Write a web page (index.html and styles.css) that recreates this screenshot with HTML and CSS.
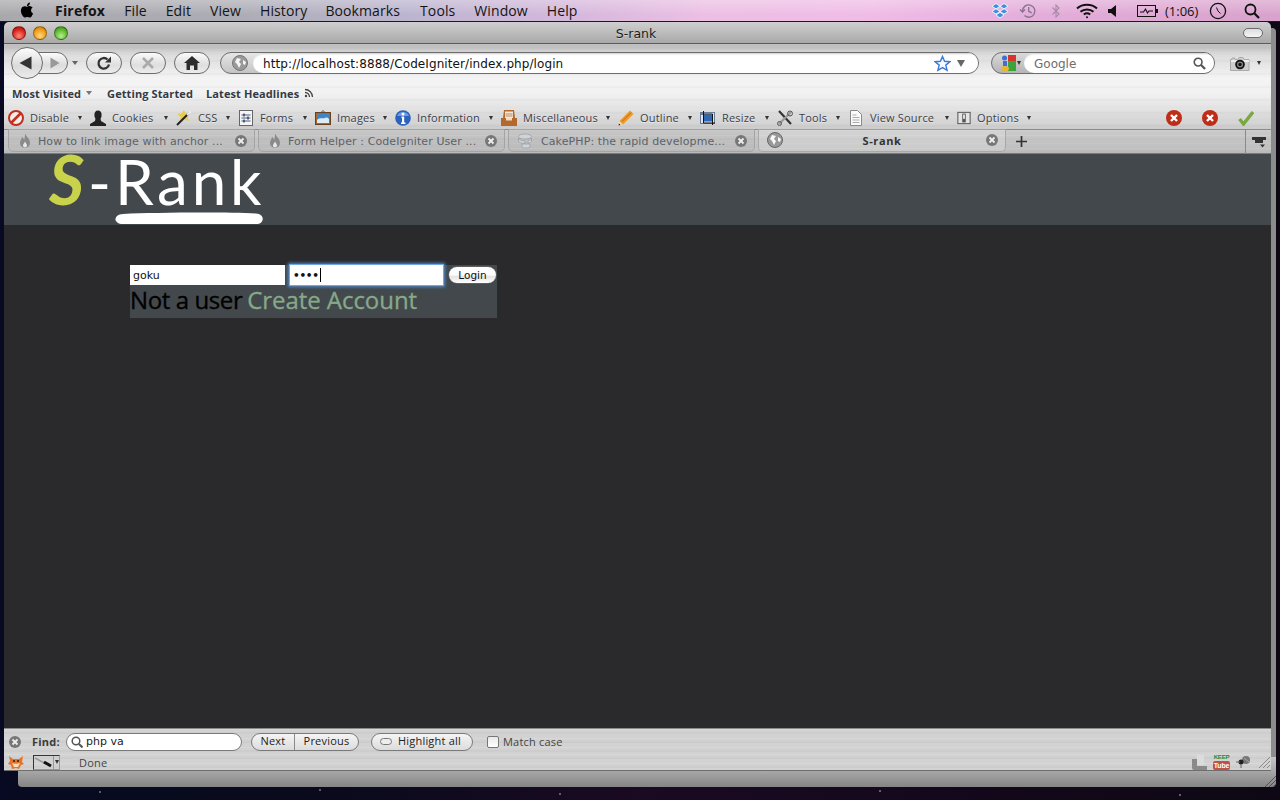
FILE: index.html
```html
<!DOCTYPE html>
<html lang="en">
<head>
<meta charset="utf-8">
<title>S-rank</title>
<link rel="stylesheet" href="styles.css">
</head>
<body>
<header class="menubar">
  <svg class="apple" viewBox="0 0 24 24" width="18" height="18"><path d="M18.71 19.5c-.83 1.24-1.71 2.45-3.05 2.47-1.34.03-1.77-.79-3.29-.79-1.53 0-2 .77-3.27.82-1.31.05-2.3-1.32-3.14-2.53C4.25 17 2.94 12.45 4.7 9.39c.87-1.52 2.43-2.48 4.12-2.51 1.28-.02 2.5.87 3.29.87.78 0 2.26-1.07 3.8-.91.65.03 2.47.26 3.64 1.98-.09.06-2.17 1.28-2.15 3.81.03 3.02 2.65 4.03 2.68 4.04-.03.07-.42 1.44-1.38 2.83M13 3.5c.73-.83 1.94-1.46 2.94-1.5.13 1.17-.34 2.35-1.04 3.19-.69.85-1.83 1.51-2.95 1.42-.15-1.15.41-2.35 1.05-3.11z"/></svg>
  <nav class="menus">
    <span class="menu menu-app">Firefox</span><span class="menu">File</span><span class="menu">Edit</span><span class="menu">View</span><span class="menu">History</span><span class="menu">Bookmarks</span><span class="menu">Tools</span><span class="menu">Window</span><span class="menu">Help</span>
  </nav>
  <div class="extras">
    <svg class="x-dropbox" viewBox="0 0 18 16" width="18" height="16"><g fill="#3d8fe0" stroke="#fff" stroke-width=".8"><path d="M5 0.6 9 3.2 5 5.8 1 3.2z"/><path d="M13 0.6 17 3.2 13 5.8 9 3.2z"/><path d="M5 5.8 9 8.4 5 11 1 8.4z"/><path d="M13 5.8 17 8.4 13 11 9 8.4z"/><path d="M5 12 9 9.4 13 12 9 15 5 12z"/></g></svg>
    <svg class="x-tm" viewBox="0 0 18 16" width="18" height="16" fill="none" stroke="#85728a" stroke-width="1.3"><path d="M3.5 8a6.2 6.2 0 1 1 2 4.6"/><path d="M1 6.5 3.5 9 6 6.5"/><path d="M9.7 4v4.3l3 1.6"/></svg>
    <svg class="x-bt" viewBox="0 0 10 16" width="10" height="16" fill="none" stroke="#a88aa5" stroke-width="1.1"><path d="M1.5 4.5 8 11 5 14V2L8 5 1.5 11.5"/></svg>
    <svg class="x-wifi" viewBox="0 0 22 16" width="22" height="16" fill="none" stroke="#111" stroke-width="2"><path d="M1 5.5C6.500 .5 15.500 .5 21 5.500"/><path d="M4.500 8.700C8 5.600 14 5.600 17.500 8.700"/><path d="M7.800 11.500C9.800 10 12.200 10 14.200 11.500"/><circle cx="11" cy="14.200" r="1" fill="#111" stroke="none"/></svg>
    <svg class="x-vol" viewBox="0 0 8 12" width="8" height="12"><path d="M0 4h3L8 0v12L3 8H0z" fill="#111"/></svg>
    <svg class="x-batt" viewBox="0 0 22 12" width="22" height="12" fill="none" stroke="#111"><rect x=".5" y=".5" width="18" height="11"/><path d="M3 7h3.500l2-3 2 4 1.500-2h4" stroke-width="1.100"/><path d="M20 4v4" stroke-width="2"/></svg>
    <span class="x-time">(1:06)</span>
    <svg class="x-clock" viewBox="0 0 18 18" width="18" height="18" fill="none" stroke="#111" stroke-width="1.300"><circle cx="9" cy="9" r="7.600"/><path d="M9 9 7.500 5.500M9 9l2.500 2.500" stroke-width="1"/></svg>
    <svg class="x-spot" viewBox="0 0 16 16" width="16" height="16" fill="none" stroke="#111" stroke-width="1.800"><circle cx="6.500" cy="6.500" r="5"/><path d="M10.300 10.300 15 15" stroke-width="2.300"/></svg>
  </div>
</header>

<div class="back-window">
  <svg class="back-grip back-grip-low" viewBox="0 0 11 11" width="11" height="11" stroke="#555"><path d="M0 11 11 0M4 11 11 4M8 11 11 8"/></svg>
</div>

<main class="window">
  <div class="titlebar">
    <i class="light light-red"></i><i class="light light-amber"></i><i class="light light-green"></i>
    <span class="title">S-rank</span>
    <i class="toolbar-pill"></i>
  </div>

  <div class="chrome">
    <div class="navrow">
      <div class="backfwd">
        <button class="back"><svg viewBox="0 0 14 14" width="14" height="14"><path d="M0.500 7 12.500 0.500v13z" fill="#333"/></svg></button>
        <button class="fwd"><svg viewBox="0 0 10 12" width="10" height="12"><path d="M9.500 6 .500 .5v11z" fill="#999"/></svg></button>
      </div>
      <i class="caret caret-hist"></i>
      <button class="pill pill-reload"><svg viewBox="0 0 16 16" width="16" height="16" fill="none" stroke="#333" stroke-width="2.300"><path d="M13 9.500a5.300 5.300 0 1 1-1.500-5"/><path d="M15 1.500v6h-6z" fill="#333" stroke="none"/></svg></button>
      <button class="pill"><svg viewBox="0 0 14 14" width="14" height="14" stroke="#aaa" stroke-width="2.500"><path d="M2 2 12 12M12 2 2 12"/></svg></button>
      <button class="pill"><svg viewBox="0 0 16 14" width="16" height="14" fill="#2c2c2c"><path d="M8 0 0 7h2.500v7H6V9.500h4V14h3.500V7H16z"/></svg></button>
      <div class="urlbar">
        <div class="url-site"><svg viewBox="0 0 16 16" width="16" height="16"><circle cx="8" cy="8" r="7.500" fill="#999" stroke="#777"/><path d="M5 3 9 4 7 7 9 9 7 13 5 9 3 7zM11 5l3 2-1 3-2-1z" fill="#f6f6f6"/></svg></div>
        <div class="url-field">
          <span class="url-text">http://localhost:8888/CodeIgniter/index.php/login</span>
          <svg class="star" viewBox="0 0 18 18" width="17" height="17"><path d="M9 1.500 11.200 6.700 16.800 7.100 12.500 10.700 13.900 16.200 9 13.300 4.100 16.200 5.500 10.700 1.200 7.100 6.800 6.700z" fill="#f4f8ff" stroke="#3d78d6" stroke-width="1.500"/></svg>
          <i class="caret caret-url"></i>
        </div>
      </div>
      <div class="searchbar">
        <div class="search-engine">
          <svg viewBox="0 0 15 16" width="15" height="16"><path d="M7 0h8v6H7z" fill="#d9342b"/><path d="M7 6h8v10H7z" fill="#3aa33c"/><circle cx="3.500" cy="3" r="2.500" fill="#3d6fd8"/><path d="M2 6h4v5H2z" fill="#3d6fd8"/><ellipse cx="4" cy="13.500" rx="4" ry="2.500" fill="#edb52e"/></svg>
          <i class="caret caret-small"></i>
        </div>
        <div class="search-field">
          <span class="search-text">Google</span>
          <svg viewBox="0 0 14 14" width="13" height="13" fill="none" stroke="#555" stroke-width="1.700"><circle cx="5.500" cy="5.500" r="4.200"/><path d="M8.700 8.700 13 13" stroke-width="2.400"/></svg>
        </div>
      </div>
      <svg class="camera" viewBox="0 0 20 15" width="20" height="15"><path d="M.5 3.500h1.500V2h3v1.500h3l1-2h4l1 2h5v11H.5z" fill="#cfcfcf" stroke="#aaa"/><path d="M1 4h18v2H1z" fill="#eee"/><circle cx="10" cy="8.500" r="4.800" fill="#111"/><circle cx="10" cy="8.500" r="3" fill="#888"/><circle cx="10" cy="8.500" r="1.700" fill="#111"/></svg>
      <i class="caret caret-cam"></i>
    </div>

    <div class="bookmarks">
      <span class="bm">Most Visited</span><i class="caret caret-bm"></i>
      <span class="bm bm-gs">Getting Started</span>
      <span class="bm bm-lh">Latest Headlines</span>
      <svg class="rss" viewBox="0 0 10 10" width="10" height="10" fill="none" stroke="#444" stroke-width="1.300"><circle cx="2" cy="8" r="1.200" fill="#444" stroke="none"/><path d="M1 4.500a4.500 4.500 0 0 1 4.500 4.500M1 1.500a7.500 7.500 0 0 1 7.500 7.500"/></svg>
    </div>

    <div class="devbar">
      <div class="dev">
        <svg viewBox="0 0 16 16" width="16" height="16"><circle cx="8" cy="8" r="7" fill="#f4ece8" stroke="#c0301f" stroke-width="2"/><path d="M3.500 12.500 12.500 3.500" stroke="#c0301f" stroke-width="2.600"/></svg>
        <span class="dev-t w-disable">Disable</span><i class="dev-a"></i>
      </div>
      <div class="dev">
        <svg viewBox="0 0 16 16" width="16" height="16" fill="#222"><ellipse cx="8" cy="5" rx="3.600" ry="4.500"/><path d="M5.500 8.500h5l.5 2.500 5 3v2H0v-2l5-3z"/></svg>
        <span class="dev-t w-cookies">Cookies</span><i class="dev-a"></i>
      </div>
      <div class="dev">
        <svg viewBox="0 0 16 16" width="16" height="16"><path d="M8 0l1.500 3.500L14 3l-2.500 3.500L13 11 8.500 9.500 4 12l.5-5L1 4l4.500-.5z" fill="#e8cc50"/><path d="M1 15 13 3" stroke="#222" stroke-width="2"/><path d="M11 5 14.500 1.500" stroke="#eee" stroke-width="2"/></svg>
        <span class="dev-t w-css">CSS</span><i class="dev-a"></i>
      </div>
      <div class="dev">
        <svg viewBox="0 0 16 16" width="16" height="16"><rect x="1.500" y=".5" width="13" height="15" fill="#f5f5f5" stroke="#666"/><path d="M3.500 5h9M3.500 8h9M3.500 11h9" stroke="#3b5f93" stroke-width="1.200"/><path d="M6 3.500v3M10 6.500v3M6 9.500v3" stroke="#333" stroke-width="1.300"/></svg>
        <span class="dev-t w-forms">Forms</span><i class="dev-a"></i>
      </div>
      <div class="dev">
        <svg viewBox="0 0 16 16" width="16" height="16"><rect x=".5" y="2.500" width="15" height="12" fill="#a9672c" stroke="#6b4018"/><rect x="2" y="4" width="12" height="9" fill="#3f86c9"/><path d="M2 10c3-3 6-1 8-2s3 0 4 1v4H2z" fill="#dcecf7"/><path d="M6 2.500 8 .5 10 2.500" fill="none" stroke="#555"/></svg>
        <span class="dev-t w-images">Images</span><i class="dev-a"></i>
      </div>
      <div class="dev">
        <svg viewBox="0 0 16 16" width="16" height="16"><circle cx="8" cy="8" r="7.800" fill="#2a62bd"/><path d="M2 6a6.500 6.500 0 0 1 12 0z" fill="#6d9bdf"/><circle cx="8" cy="4" r="1.500" fill="#fff"/><path d="M6.500 6.500h2.700v6H10.500V14H6v-1.500h1v-4.500h-.5z" fill="#fff"/></svg>
        <span class="dev-t w-info">Information</span><i class="dev-a"></i>
      </div>
      <div class="dev">
        <svg viewBox="0 0 16 16" width="16" height="16"><path d="M3 0h10l1 8h2v8H0V8h2z" fill="#b5682c"/><path d="M4 1.500h8v6.500H4z" fill="#f6e9d9"/><path d="M4.500 4h7M4.500 6h7" stroke="#b58a5f"/><path d="M5 8h6v2.500H5z" fill="#f0dcc4"/></svg>
        <span class="dev-t w-misc">Miscellaneous</span><i class="dev-a"></i>
      </div>
      <div class="dev">
        <svg viewBox="0 0 16 16" width="16" height="16"><path d="M12 .5 15.500 4 5 14.500 1.500 11z" fill="#ee9a2a"/><path d="M1.500 11 .5 15.500 5 14.500z" fill="#f3d7a8"/><path d="M.5 15.500 1 13.500 2.500 15z" fill="#222"/><path d="M4 11.500 13 2.500" stroke="#b86a12"/></svg>
        <span class="dev-t w-outline">Outline</span><i class="dev-a"></i>
      </div>
      <div class="dev">
        <svg viewBox="0 0 16 16" width="16" height="16"><rect x=".5" y="2.500" width="14" height="11" fill="#dfe6ef" stroke="#6a7d98"/><rect x="4" y="4.500" width="8" height="7" fill="#2f68b5"/><path d="M3.500 1v12h11.500M1 4h11.500v11" fill="none" stroke="#111"/></svg>
        <span class="dev-t w-resize">Resize</span><i class="dev-a"></i>
      </div>
      <div class="dev">
        <svg viewBox="0 0 16 16" width="16" height="16" fill="none"><path d="M2 1 14 14" stroke="#333" stroke-width="2.200"/><path d="M14 2 2 14" stroke="#999" stroke-width="2.200"/><circle cx="13" cy="3.500" r="2.500" stroke="#555"/><circle cx="2.500" cy="13.500" r="2" stroke="#555"/></svg>
        <span class="dev-t w-tools">Tools</span><i class="dev-a"></i>
      </div>
      <div class="dev">
        <svg viewBox="0 0 16 16" width="16" height="16"><path d="M2.500 .5h7l4 4v11h-11z" fill="#fafafa" stroke="#888"/><path d="M4.500 5h4M4.500 7.500h7M4.500 10h7M4.500 12.500h7" stroke="#aaa"/></svg>
        <span class="dev-t w-source">View Source</span><i class="dev-a"></i>
      </div>
      <div class="dev">
        <svg viewBox="0 0 16 16" width="14" height="16"><rect x="1" y="1.500" width="14" height="13" fill="#e4e4e4" stroke="#444"/><rect x="6" y="3" width="4" height="10" fill="#555"/><rect x="7" y="4" width="2" height="5" fill="#eee"/></svg>
        <span class="dev-t w-options">Options</span><i class="dev-a"></i>
      </div>
      <div class="dev-status">
        <svg viewBox="0 0 16 16" width="16" height="16"><circle cx="8" cy="8" r="8" fill="#bd2d17"/><path d="M5 5 11 11M11 5 5 11" stroke="#fff" stroke-width="2.400"/></svg>
        <svg viewBox="0 0 16 16" width="16" height="16"><circle cx="8" cy="8" r="8" fill="#bd2d17"/><path d="M5 5 11 11M11 5 5 11" stroke="#fff" stroke-width="2.400"/></svg>
        <svg viewBox="0 0 16 16" width="16" height="16" fill="none"><path d="M1.500 9 5.500 14 15 2" stroke="#7ba845" stroke-width="3.400"/></svg>
      </div>
    </div>

    <div class="tabs">
      <div class="tab">
        <svg class="fav" viewBox="0 0 16 16" width="16" height="16"><path d="M8 .5c1 3 5 5 5 9.500a5 5 0 0 1-10 0C3 7 5 6 5 4c1 .5 2 1.500 2 3 1-2 1-4.500 1-6.500z" fill="#8a8a8a"/><path d="M8 8c0 2-2 2.500-2 4.500a2 2 0 0 0 4 0C10 10.500 8 10 8 8z" fill="#e8e8e8"/></svg>
        <span class="tab-t">How to link image with anchor ...</span>
        <svg class="tab-x" viewBox="0 0 12 12" width="12" height="12"><circle cx="6" cy="6" r="6" fill="#777"/><path d="M3.500 3.500 8.500 8.500M8.500 3.500 3.500 8.500" stroke="#eee" stroke-width="1.800"/></svg>
      </div>
      <div class="tab">
        <svg class="fav" viewBox="0 0 16 16" width="16" height="16"><path d="M8 .5c1 3 5 5 5 9.500a5 5 0 0 1-10 0C3 7 5 6 5 4c1 .5 2 1.500 2 3 1-2 1-4.500 1-6.500z" fill="#8a8a8a"/><path d="M8 8c0 2-2 2.500-2 4.500a2 2 0 0 0 4 0C10 10.500 8 10 8 8z" fill="#e8e8e8"/></svg>
        <span class="tab-t">Form Helper : CodeIgniter User ...</span>
        <svg class="tab-x" viewBox="0 0 12 12" width="12" height="12"><circle cx="6" cy="6" r="6" fill="#777"/><path d="M3.500 3.500 8.500 8.500M8.500 3.500 3.500 8.500" stroke="#eee" stroke-width="1.800"/></svg>
      </div>
      <div class="tab">
        <svg class="fav fav-cake" viewBox="0 0 16 16" width="16" height="16" fill="#cfd4d8" stroke="#9aa0a5" stroke-width=".8"><ellipse cx="8" cy="3.500" rx="6.500" ry="2.500"/><path d="M1.500 5v3c0 1.300 3 2.500 6.500 2.500V8C4.500 8 1.500 6.500 1.500 5zM14.500 5v3c0 1-1.500 2-3.500 2.300V7.800C13 7.400 14.500 6 14.500 5z"/><path d="M5 11v2.500c0 1 1.500 1.500 4 1.500s4-.5 4-1.500V11z"/></svg>
        <span class="tab-t">CakePHP: the rapid developme...</span>
        <svg class="tab-x" viewBox="0 0 12 12" width="12" height="12"><circle cx="6" cy="6" r="6" fill="#777"/><path d="M3.500 3.500 8.500 8.500M8.500 3.500 3.500 8.500" stroke="#eee" stroke-width="1.800"/></svg>
      </div>
      <div class="tab tab-active">
        <svg class="fav" viewBox="0 0 16 16" width="16" height="16"><circle cx="8" cy="8" r="7.500" fill="#999" stroke="#666"/><path d="M5 3 9 4 7 7 9 9 7 13 5 9 3 7zM11 5l3 2-1 3-2-1z" fill="#f8f8f8"/></svg>
        <span class="tab-t tab-t-active">S-rank</span>
        <svg class="tab-x" viewBox="0 0 12 12" width="12" height="12"><circle cx="6" cy="6" r="6" fill="#777"/><path d="M3.500 3.500 8.500 8.500M8.500 3.500 3.500 8.500" stroke="#eee" stroke-width="1.800"/></svg>
      </div>
      <div class="tab-rest">
        <svg class="plus" viewBox="0 0 11 11" width="11" height="11"><path d="M5.500 0v11M0 5.500h11" stroke="#333" stroke-width="1.700"/></svg>
        <div class="tab-list">
          <svg viewBox="0 0 14 12" width="14" height="12" fill="#333"><path d="M0 1h14v3H0zM3 4h8v3H3z"/><path d="M8 8.500h5L10.500 11.500z"/></svg>
        </div>
      </div>
    </div>
  </div>

  <div class="page">
    <div class="site-head">
      <div class="logo"><span class="logo-s">S</span><span class="logo-rest">-Rank</span></div>
      <svg class="swoosh" viewBox="0 0 148 12" width="148" height="12"><path d="M8 2C40 .5 110 0 141 1.500c9 .5 9 10.500 0 10.500H8C-2 12-2 2.500 8 2z" fill="#fff"/></svg>
    </div>
    <div class="site-body">
      <form class="login">
        <div class="login-row">
          <input class="field" type="text" value="goku">
          <div class="field field-focus"><span class="dots">••••</span><i class="cursor"></i></div>
          <button type="button" class="login-btn">Login</button>
        </div>
        <p class="login-foot">Not a user <a class="create">Create Account</a></p>
      </form>
    </div>
  </div>

  <div class="findbar">
    <svg class="find-x" viewBox="0 0 12 12" width="12" height="12"><circle cx="6" cy="6" r="6" fill="#777"/><path d="M3.500 3.500 8.500 8.500M8.500 3.500 3.500 8.500" stroke="#eee" stroke-width="1.800"/></svg>
    <b class="find-l">Find:</b>
    <div class="find-field">
      <svg viewBox="0 0 12 12" width="12" height="12" fill="none" stroke="#555" stroke-width="1.500"><circle cx="5" cy="5" r="3.800"/><path d="M8 8 11.500 11.500" stroke-width="2"/></svg>
      <span>php va</span>
    </div>
    <div class="seg"><span class="seg-a">Next</span><span class="seg-b">Previous</span></div>
    <div class="hl"><i class="hl-ico"></i><span class="hl-t">Highlight all</span></div>
    <i class="check"></i>
    <span class="match">Match case</span>
  </div>

  <footer class="statusbar">
    <svg class="fox" viewBox="0 0 16 16" width="16" height="16"><path d="M1 2 5 5h6l4-3-1 6 2 2-3 1-2 4-3-1-4 1-1-4-3-1 2-3z" fill="#e5732a"/><path d="M4 9c2 1 6 1 8 0l-2 4H6z" fill="#f7ddb5"/><circle cx="6" cy="7" r="1" fill="#222"/><circle cx="10" cy="7" r="1" fill="#222"/></svg>
    <div class="dropper">
      <div class="dropper-ico"><svg viewBox="0 0 20 12" width="20" height="12"><path d="M1 2 12 8" stroke="#999" stroke-width="1.500"/><path d="M10 6 17 10" stroke="#111" stroke-width="3"/></svg></div>
      <div class="dropper-a"><i class="dev-a"></i></div>
    </div>
    <span class="done">Done</span>
    <div class="status-right">
      <svg viewBox="0 0 15 16" width="15" height="16"><path d="M0 5h5v7h10v4H2a2 2 0 0 1-2-2z" fill="#8a8a8a"/><path d="M5 1h6a1 1 0 0 1 1 1v9H6a1 1 0 0 1-1-1z" fill="#dcdcdc"/></svg>
      <div class="keep"><span class="keep-a">KEEP</span><span class="keep-b">Tube</span></div>
      <svg viewBox="0 0 16 14" width="16" height="14"><circle cx="10" cy="5" r="4" fill="#777"/><circle cx="5" cy="7" r="2.500" fill="#222"/><path d="M0 7h4M5 9v4" stroke="#666"/><path d="M8 3 13 7" stroke="#aaa"/></svg>
    </div>
    <svg class="grip" viewBox="0 0 11 11" width="11" height="11" stroke="#8a8a8a"><path d="M0 11 11 0M4 11 11 4M8 11 11 8"/></svg>
  </footer>
</main>
</body>
</html>
```

FILE: styles.css
```css
* { box-sizing: border-box; }

html, body { margin: 0; height: 100%; }

body {
  width: 1280px;
  height: 800px;
  overflow: hidden;
  position: relative;
  font-family: "DejaVu Sans", sans-serif;
  background:
    radial-gradient(circle at 6px 760px, #8088a8 0 1px, transparent 1.500px),
    radial-gradient(circle at 100px 792px, #555a70 0 1px, transparent 1.500px),
    radial-gradient(circle at 320px 790px, #555a70 0 1px, transparent 1.500px),
    radial-gradient(circle at 560px 794px, #6a5a70 0 1px, transparent 1.500px),
    radial-gradient(circle at 880px 791px, #6a5a70 0 1px, transparent 1.500px),
    radial-gradient(circle at 1180px 795px, #6a5a70 0 1px, transparent 1.500px),
    linear-gradient(90deg, #070a22 0, #0a0a1c 25%, #1a0a22 50%, #12081a 80%, #0e0814 100%);
}

i { display: block; flex: none; }
svg { display: block; flex: none; }
button { font: inherit; padding: 0; margin: 0; }

/* Menu bar */
.menubar {
  height: 22px;
  display: flex;
  align-items: center;
  border-bottom: 1px solid #1a1a1a;
  background:
    linear-gradient(180deg, rgba(255,255,255,.28), rgba(255,255,255,0) 70%),
    linear-gradient(90deg, #a9a9ad 0, #acacb4 18%, #bcb5d0 32%, #d6b8dc 45%, #ecbfe4 55%, #f0bce6 68%, #e4aedb 80%, #d9a2cc 100%);
  color: #111;
  font-size: 14px;
}
.apple { margin-left: 18px; margin-top: -2px; }
.menus { display: flex; margin-left: 19px; }
.menu { margin-right: 19px; font-family: "Open Sans", sans-serif; font-size: 14px; line-height: 21px; color: #141414; letter-spacing: .1px; }
.menu:nth-child(6) { margin-right: 20px; }
.menu:nth-child(5) { margin-right: 18px; }
.menu-app { font-weight: 700; letter-spacing: .2px; margin-right: 19px; }
.extras { margin-left: auto; display: flex; align-items: center; height: 21px; position: relative; width: 290px; }
.x-dropbox { margin-left: 1px; }
.x-tm { margin-left: 10px; }
.x-bt { margin-left: 14px; }
.x-wifi { margin-left: 15px; }
.x-vol { margin-left: 10px; }
.x-batt { margin-left: 21px; }
.x-time { margin-left: 6px; font-family: "Open Sans", sans-serif; font-size: 13px; color: #111; width: 38px; }
.x-clock { margin-left: 6px; }
.x-spot { margin-left: 17px; }

/* Windows */
.back-window {
  position: absolute;
  left: 18px;
  top: 28px;
  width: 1258px;
  height: 759px;
  border-radius: 0 4px 4px 4px;
  background: linear-gradient(180deg, #8c8c8c 0, #8c8c8c 96%, #c4c4c4 96.100%, #858585 100%);
}
.back-grip-low { position: absolute; right: 0; bottom: 0; }
.window {
  position: absolute;
  left: 4px;
  top: 22px;
  width: 1267px;
  height: 749px;
  display: flex;
  flex-direction: column;
  border-radius: 5px 5px 0 0;
  overflow: hidden;
  background: #2a2a2c;
}

.titlebar {
  height: 22px;
  flex: none;
  display: flex;
  align-items: center;
  position: relative;
  border-bottom: 1px solid #5c5c5c;
  background: linear-gradient(180deg, #cfcfcf, #a9a9a9);
  padding-left: 8px;
}
.light { width: 14px; height: 14px; border-radius: 50%; margin-right: 7px; border: 1px solid rgba(0,0,0,.35); }
.light-red { background: radial-gradient(circle at 50% 75%, #ff8a7c, #d8231c 60%, #a70f0c); }
.light-amber { background: radial-gradient(circle at 50% 75%, #ffd97a, #f09b17 60%, #bb6e07); }
.light-green { background: radial-gradient(circle at 50% 75%, #b8f08c, #5cb52e 60%, #37801a); }
.title { position: absolute; left: 0; right: 0; top: 4px; text-align: center; font-size: 12.500px; line-height: 16px; color: #1c1c1c; padding-right: 3px; text-shadow: 0 1px 0 rgba(255,255,255,.35); }
.toolbar-pill { margin-left: auto; margin-right: 8px; width: 20px; height: 10px; border-radius: 5px; border: 1px solid #6a6a6a; background: linear-gradient(180deg, #ddd, #f4f4f4); }

/* Metal chrome */
.chrome {
  flex: none;
  height: 110px;
  display: flex;
  flex-direction: column;
  background:
    repeating-linear-gradient(180deg, rgba(255,255,255,.1) 0 1px, transparent 1px 3px, rgba(0,0,0,.02) 3px 5px, transparent 5px 8px, rgba(255,255,255,.06) 8px 9px, transparent 9px 13px),
    linear-gradient(180deg, #b9b9b9 0, #dcdcdc 10%, #f4f4f4 32%, #f1f1f1 45%, #dedede 62%, #c9c9c9 80%, #bcbcbc 100%);
}
.navrow { height: 38px; flex: none; display: flex; align-items: center; padding-left: 7px; }
.backfwd { display: flex; align-items: center; width: 57px; flex: none; }
.back {
  width: 32px; height: 32px; border-radius: 50%; flex: none;
  display: flex; align-items: center; justify-content: center;
  border: 1px solid #6d6d6d; position: relative; z-index: 1;
  background: linear-gradient(180deg, #fdfdfd, #dadada 60%, #ececec);
}
.back svg { margin-left: -2px; }
.fwd {
  width: 37px; height: 22px; margin-left: -12px; flex: none;
  border: 1px solid #6d6d6d; border-radius: 0 11px 11px 0;
  display: flex; align-items: center; padding-left: 18px;
  background: linear-gradient(180deg, #fbfbfb, #dcdcdc 60%, #ececec);
}
.caret { width: 0; height: 0; border-left: 3.500px solid transparent; border-right: 3.500px solid transparent; border-top: 4px solid #666; }
.caret-hist { margin-left: 4px; margin-right: 8px; }
.pill {
  width: 36px; height: 22px; border-radius: 11px; flex: none; margin-right: 8px;
  border: 1px solid #6d6d6d;
  display: flex; align-items: center; justify-content: center;
  background: linear-gradient(180deg, #fbfbfb, #dedede 60%, #ececec);
}
.urlbar {
  margin-left: 2px; width: 759px; height: 22px; flex: none; display: flex;
  border: 1px solid #6d6d6d; border-radius: 11px; overflow: hidden;
  background: linear-gradient(180deg, #e6e6e6, #c4c4c4);
}
.url-site { width: 32px; flex: none; display: flex; align-items: center; justify-content: center; padding-left: 6px; }
.url-field {
  flex: 1; display: flex; align-items: center;
  border-radius: 11px 0 0 11px; background: #fff;
  box-shadow: inset 0 2px 2px -1px #ccc;
  padding: 0 13px 0 10px;
}
.url-text { flex: 1; font-size: 12px; line-height: 16px; padding-top: 1px; color: #111; letter-spacing: .09px; white-space: nowrap; }
.star { margin-right: 6px; }
.caret-url { border-left-width: 4.500px; border-right-width: 4.500px; border-top-width: 7px; border-top-color: #666; }
.searchbar {
  margin-left: 12px; width: 224px; height: 22px; flex: none; display: flex;
  border: 1px solid #6d6d6d; border-radius: 11px; overflow: hidden;
  background: linear-gradient(180deg, #dadada, #b4b4b4);
}
.search-engine { width: 32px; flex: none; display: flex; align-items: center; padding-left: 9px; gap: 1px; }
.caret-small { border-left-width: 2.500px; border-right-width: 2.500px; border-top-width: 4px; border-top-color: #333; }
.search-field {
  flex: 1; display: flex; align-items: center; justify-content: space-between;
  border-radius: 11px 0 0 11px; background: #fff;
  box-shadow: inset 0 2px 2px -1px #ccc;
  padding: 0 8px 0 10px;
}
.search-text { font-size: 12px; line-height: 16px; padding-top: 1px; color: #6d6d6d; }
.camera { margin-left: 15px; }
.caret-cam { margin-left: 7px; border-left-width: 2.500px; border-right-width: 2.500px; border-top-color: #333; }

.bookmarks { height: 24px; flex: none; display: flex; align-items: center; padding-left: 8px; padding-bottom: 2px; }
.bm { font-size: 11px; font-weight: 700; color: #333a44; white-space: nowrap; font-family: "Open Sans", sans-serif; letter-spacing: .1px; text-shadow: 0 1px 0 rgba(255,255,255,.5); }
.caret-bm { margin-left: 5px; border-top-color: #777; }
.bm-gs { margin-left: 15px; }
.bm-lh { margin-left: 13px; }
.rss { margin-left: 5px; }

.devbar { height: 23px; flex: none; display: flex; align-items: center; padding-left: 4px; }
.dev { display: flex; align-items: center; margin-right: 8px; }
.dev-t { margin-left: 6px; font-size: 11px; color: #3a4048; white-space: nowrap; font-family: "Open Sans", sans-serif; letter-spacing: .18px; text-shadow: 0 1px 0 rgba(255,255,255,.4); }
.dev-a { margin-left: 8px; width: 0; height: 0; border-left: 2.500px solid transparent; border-right: 2.500px solid transparent; border-top: 4px solid #333; }
.w-disable { width: 40px; }
.w-cookies { width: 44px; }
.w-css { width: 20px; }
.w-forms { width: 35px; }
.w-images { width: 38px; }
.w-info { width: 64px; }
.w-misc { width: 75px; }
.w-outline { width: 40px; }
.w-resize { width: 35px; }
.w-tools { width: 29px; }
.w-source { width: 67px; }
.w-options { width: 42px; }
.dev-status { margin-left: auto; display: flex; gap: 20px; padding-right: 17px; }

.tabs { height: 25px; flex: none; display: flex; padding-left: 4px; border-bottom: 1px solid #7b7b7b; box-shadow: inset 0 1px 0 #8a8a8a; }
.tab {
  width: 247px; height: 23px; margin-right: 3px; flex: none;
  display: flex; align-items: center; padding: 0 7px 0 8px;
  border: 1px solid #a4a4a4; border-radius: 0 0 5px 5px;
  background: rgba(0,0,0,.02);
}
.fav { margin-right: 5px; width: 16px; }
.fav-cake { margin-right: 8px; }
.tab-t { flex: 1; font-size: 11px; line-height: 16px; padding-top: 2px; color: #5c6268; white-space: nowrap; font-family: "DejaVu Sans", sans-serif; letter-spacing: .1px; }
.tab-t-active { text-align: center; color: #333; font-weight: 700; padding-right: 10px; padding-top: 1px; font-family: "Open Sans", sans-serif; letter-spacing: .6px; }
.tab-active { width: 248px; margin-right: 0; border-top: 0; border-color: #a8a8a8; background: rgba(255,255,255,.18); height: 23px; }
.tab-rest { flex: 1; display: flex; align-items: center; justify-content: space-between; padding-left: 10px; height: 24px; }
.plus { margin-top: 1px; }
.tab-list { width: 26px; height: 24px; border-left: 1px solid #8a8a8a; display: flex; align-items: center; justify-content: center; margin-top: 1px; }

/* Page */
.page { flex: 1; display: flex; flex-direction: column; min-height: 0; }
.site-head { height: 71px; flex: none; background: #42484b; padding-left: 111px; }
.logo {
  height: 58px; margin-left: -66px; white-space: nowrap;
  font-family: Lato, sans-serif; font-weight: 400; font-size: 62px; line-height: 50px; color: #fff;
}
.logo-s { color: #c8d24a; font-style: italic; font-weight: 700; font-size: 68px; }
.logo-rest { letter-spacing: 3.800px; margin-left: 4px; }
.site-body { flex: 1; background: #2a2a2c; padding: 40px 0 0 126px; }
.login { width: 367px; height: 53px; background: #42484b; }
.login-row { display: flex; align-items: flex-start; height: 22px; }
.field {
  width: 155px; height: 20px; padding: 0 0 0 3px; margin: 0;
  border: 0; border-radius: 0; background: #fff;
  font-family: "DejaVu Sans", sans-serif; font-size: 11px; color: #111; outline: 0;
}
.field-focus {
  margin-left: 5px; width: 153px; display: flex; align-items: center;
  box-shadow: 0 0 0 1px #6fa9de, 0 0 3px 2px rgba(84,148,218,.9);
}
.dots { font-size: 10.500px; font-weight: 700; line-height: 20px; letter-spacing: -.3px; }
.cursor { width: 1px; height: 14px; background: #000; margin-left: 1px; }
.login-btn {
  margin: 2px 0 0 6px; width: 47px; height: 16px; border-radius: 8px; border: 0;
  font-family: "DejaVu Sans", sans-serif; font-size: 10.500px; color: #111;
  background: linear-gradient(180deg, #fff, #fbfbfb 50%, #e4e4e4 60%, #fff);
  box-shadow: 0 0 0 .5px #777;
}
.login-foot { margin: 0; font-family: "Open Sans", sans-serif; font-size: 24px; line-height: 25px; color: #000; letter-spacing: -.4px; white-space: nowrap; -webkit-text-stroke: .3px currentColor; }
.create { color: #86a98a; margin-left: -1px; letter-spacing: -.05px; }

/* Find bar */
.findbar, .statusbar {
  flex: none;
  display: flex;
  align-items: center;
  background:
    repeating-linear-gradient(180deg, rgba(255,255,255,.14) 0 1px, transparent 1px 3px, rgba(0,0,0,.025) 3px 5px, transparent 5px 9px),
    #d2d2d2;
  color: #333;
}
.findbar { height: 26px; padding-left: 5px; border-top: 1px solid #8a8a8a; }
.find-x { margin-right: 11px; }
.find-l { font-size: 11px; font-family: "Open Sans", sans-serif; letter-spacing: .2px; width: 34px; color: #3a3a3a; flex: none; }
.find-field {
  width: 176px; height: 18px; flex: none; display: flex; align-items: center; gap: 3px; padding-left: 4px;
  border: 1px solid #7a7a7a; border-radius: 9px; background: #fff;
  font-size: 11px; color: #222;
}
.find-field span { font-family: "DejaVu Sans", sans-serif; }
.seg { margin-left: 9px; width: 108px; height: 18px; flex: none; display: flex; border: 1px solid #7a7a7a; border-radius: 9px; background: linear-gradient(180deg, #f4f4f4, #dcdcdc); font-size: 11px; font-family: "Open Sans", sans-serif; line-height: 14px; color: #222; letter-spacing: .2px; }
.seg-a { width: 43px; text-align: center; border-right: 1px solid #8a8a8a; }
.seg-b { flex: 1; text-align: center; }
.hl { margin-left: 12px; width: 102px; height: 18px; flex: none; display: flex; align-items: center; gap: 6px; padding-left: 8px; border: 1px solid #7a7a7a; border-radius: 9px; background: linear-gradient(180deg, #f4f4f4, #dcdcdc); font-size: 11px; font-family: "Open Sans", sans-serif; color: #222; letter-spacing: .2px; }
.hl-t { line-height: 15px; margin-top: -2px; }
.hl-ico { width: 12px; height: 7px; border: 1px solid #777; border-radius: 4px; background: #eee; }
.check { margin-left: 14px; width: 12px; height: 12px; border: 1px solid #777; border-radius: 2px; background: linear-gradient(180deg, #e8e8e8, #fff); }
.match { margin-left: 4px; font-size: 11px; font-family: "Open Sans", sans-serif; color: #444; letter-spacing: .2px; }

.statusbar { height: 17px; padding-left: 4px; border-bottom: 1px solid #6e6e6e; position: relative; }
.dropper { margin-left: 9px; width: 27px; height: 15px; flex: none; display: flex; border: 1px solid #999; border-top-color: #333; border-left-color: #333; }
.dropper-ico { width: 20px; border-right: 1px solid #999; }
.dropper-a { flex: 1; display: flex; align-items: center; }
.dropper-a .dev-a { margin-left: 1px; }
.done { margin-left: 19px; font-size: 11px; font-family: "Open Sans", sans-serif; color: #444; letter-spacing: .2px; }
.status-right { margin-left: auto; display: flex; align-items: center; gap: 6px; margin-right: 7px; }
.keep { width: 17px; height: 16px; flex: none; display: flex; flex-direction: column; font-family: "Liberation Sans", sans-serif; font-weight: 700; font-size: 6px; line-height: 7px; text-align: center; }
.keep-a { color: #1a8a3a; height: 7px; letter-spacing: -.2px; }
.keep-b { background: #c2504a; color: #fff; border-radius: 2px; height: 9px; line-height: 9px; font-size: 7px; letter-spacing: -.2px; }
.grip { margin-right: 1px; }
```
